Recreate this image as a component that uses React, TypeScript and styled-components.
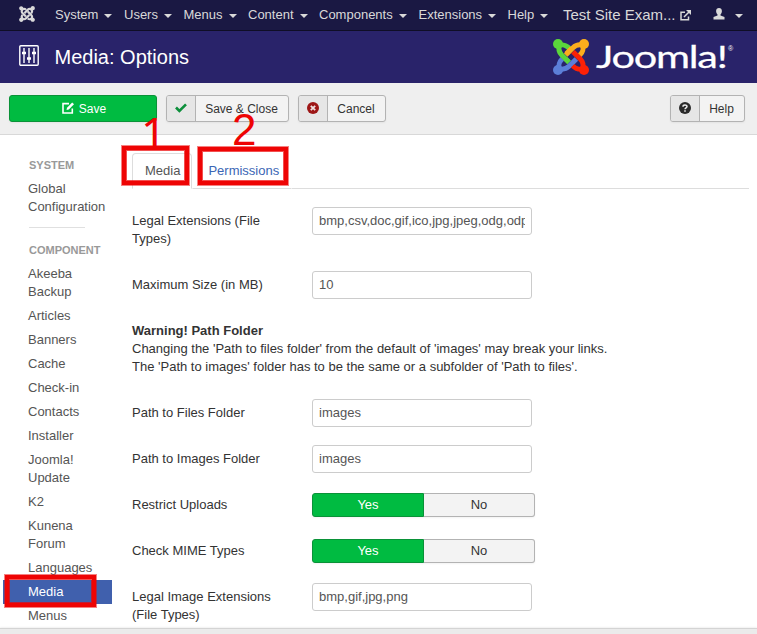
import React from "react";
import styled, { createGlobalStyle, css } from "styled-components";
import { FaJoomla } from "react-icons/fa";

const GlobalStyle = createGlobalStyle`
  * { box-sizing: border-box; }
  body {
    margin: 0;
    background: #fff;
    color: #333;
    font: 13px/18px "Liberation Sans", Arial, sans-serif;
    overflow: hidden;
  }
`;

const Page = styled.div`
  position: relative;
  display: flex;
  flex-direction: column;
  width: 757px;
  height: 634px;
  overflow: hidden;
`;

const Navbar = styled.nav`
  display: flex;
  flex: none;
  height: 31px;
  padding: 0 14px 0 19px;
  align-items: center;
  background: #1a1843;
  border-bottom: 1px solid #0f0e26;
  color: #d9d9d9;
`;

const BrandMark = styled.span`
  display: flex;
  width: 36px;
  margin-top: -2px;
  svg { width: 16px; height: 18px; }
`;

const NavItem = styled.a<{ $width: number }>`
  display: flex;
  align-items: center;
  width: ${(p) => p.$width}px;
  white-space: nowrap;
`;

const Caret = styled.i`
  margin: 2px 0 0 6px;
  border: 4px solid transparent;
  border-top-color: #d9d9d9;
  border-bottom: 0;
`;

const SiteLink = styled.a`
  display: flex;
  align-items: center;
  gap: 4px;
  font-size: 15px;
  white-space: nowrap;
`;

const UserMenu = styled.a`
  display: flex;
  align-items: center;
  margin-left: auto;
  gap: 4px;
  svg { margin-top: -3px; }
`;

const Header = styled.header`
  display: flex;
  flex: none;
  align-items: center;
  height: 52px;
  padding: 0 20px 0 19px;
  background: #29236a;
  color: #fff;
`;

const Title = styled.h1`
  flex: 1;
  margin: 0 0 0 15.5px;
  font-size: 20px;
  line-height: 24px;
  font-weight: normal;
`;

const HeaderIcon = styled.svg`
  display: block;
  margin-top: -4px;
`;

const Toolbar = styled.div`
  display: flex;
  flex: none;
  align-items: flex-start;
  gap: 9px;
  height: 52px;
  padding: 12px 12px 0 9px;
  background: #efefef;
  border-bottom: 1px solid #d8d8d8;
`;

const buttonBase = css`
  display: flex;
  height: 27px;
  padding: 0;
  font: 12px/27px "Liberation Sans", Arial, sans-serif;
  border-radius: 3px;
  box-shadow: 0 1px 2px rgba(0, 0, 0, 0.05);
  overflow: hidden;
`;

const SaveButton = styled.button`
  ${buttonBase}
  width: 148px;
  padding-left: 2px;
  justify-content: center;
  gap: 5px;
  color: #fff;
  background: #00bb41;
  border: 1px solid #0a9238;
  svg { margin-top: 6px; }
`;

const ToolButton = styled.button<{ $width: number; $end?: boolean }>`
  ${buttonBase}
  width: ${(p) => p.$width}px;
  margin-left: ${(p) => (p.$end ? "auto" : "0")};
  color: #333;
  background: #f3f3f3;
  border: 1px solid #b3b3b3;
`;

const ToolIcon = styled.span`
  display: flex;
  width: 29px;
  height: 25px;
  padding-bottom: 1px;
  align-items: center;
  justify-content: center;
  background: #e6e6e6;
  border-right: 1px solid #b3b3b3;
`;

const ToolLabel = styled.span`
  flex: 1;
  padding-right: 1px;
  text-align: center;
`;

const Body = styled.div`
  display: flex;
  flex: 1;
  min-height: 0;
  overflow: hidden;
`;

const Sidebar = styled.aside`
  width: 112px;
  flex: none;
  padding: 18px 0 0 3px;
`;

const SideHeading = styled.div`
  padding: 3px 0 3px 26px;
  font-size: 11px;
  font-weight: bold;
  color: #999;
`;

const SideLink = styled.a<{ $active?: boolean }>`
  display: block;
  padding: 3px 5px 3px 25px;
  color: ${(p) => (p.$active ? "#fff" : "#555")};
  background: ${(p) => (p.$active ? "#4060ad" : "transparent")};
`;

const Divider = styled.div`
  width: 56px;
  height: 1px;
  margin: 8px 0 10px 26px;
  background: #e0e0e0;
`;

const Content = styled.main`
  flex: 1;
  padding: 18px 8px 0 20px;
`;

const Tabs = styled.div`
  display: flex;
  height: 36px;
  margin-bottom: 18px;
  align-items: stretch;

  &::after {
    content: "";
    flex: 1;
    border-bottom: 1px solid #ddd;
  }
`;

const Tab = styled.a<{ $active?: boolean }>`
  padding: 8px ${(p) => (p.$active ? "11px 0 12px" : "12px 0 15px")};
  border: 1px solid ${(p) => (p.$active ? "#ddd" : "transparent")};
  border-bottom-color: ${(p) => (p.$active ? "#fff" : "#ddd")};
  border-radius: ${(p) => (p.$active ? "4px 4px 0 0" : "0")};
  color: ${(p) => (p.$active ? "#555" : "#3b66b5")};
`;

const Row = styled.div`
  display: grid;
  grid-template-columns: 180px auto;
  justify-content: start;
  margin-bottom: 18px;
`;

const Label = styled.label<{ $tall?: boolean }>`
  width: 160px;
  padding: 5px 0 ${(p) => (p.$tall ? 5 : 0)}px;
`;

const Input = styled.input`
  width: 220px;
  height: 28px;
  padding: 3px 6px 5px;
  font: 13px/18px "Liberation Sans", Arial, sans-serif;
  color: #555;
  background: #fff;
  border: 1px solid #ccc;
  border-radius: 3px;
`;

const Warning = styled.div`
  padding: 5px 0;
  margin-bottom: 18px;
`;

const Toggle = styled.div`
  display: flex;
  height: 24px;
  margin: 2px 0;
`;

const ToggleOption = styled.button<{ $on?: boolean }>`
  width: ${(p) => (p.$on ? 112 : 111)}px;
  padding: 0;
  font: 13px/20px "Liberation Sans", Arial, sans-serif;
  color: ${(p) => (p.$on ? "#fff" : "#333")};
  background: ${(p) => (p.$on ? "#00bb41" : "#f3f3f3")};
  border: 1px solid ${(p) => (p.$on ? "#0a9238" : "#b3b3b3")};
  border-left-width: ${(p) => (p.$on ? 1 : 0)}px;
  border-radius: ${(p) => (p.$on ? "3px 0 0 3px" : "0 3px 3px 0")};
  box-shadow: 0 1px 2px rgba(0, 0, 0, 0.05);
`;

const Footer = styled.footer`
  flex: none;
  height: 6px;
  background: #ebebeb;
  border-top: 1px solid #d4d4d4;
  box-shadow: 0 -1px 2px rgba(0, 0, 0, 0.06);
`;

const Highlight = styled.div<{ $x: number; $y: number; $w: number; $h: number }>`
  position: absolute;
  left: ${(p) => p.$x}px;
  top: ${(p) => p.$y}px;
  width: ${(p) => p.$w}px;
  height: ${(p) => p.$h}px;
  border: 4px solid #ee0404;
  box-shadow: 0 0 0 1px rgba(238, 4, 4, 0.5), inset 0 0 0 1px rgba(238, 4, 4, 0.7);
`;

const Step = styled.span<{ $x: number; $y: number; $font: string }>`
  position: absolute;
  left: ${(p) => p.$x}px;
  top: ${(p) => p.$y}px;
  font-family: ${(p) => p.$font}, sans-serif;
  font-size: 44px;
  line-height: 44px;
  color: #ee0404;
`;

const ARMS = [
  ["#5c7fd8", 270],
  ["#5bd63b", 0],
  ["#fbae1d", 90],
  ["#fb2106", 180],
] as const;

const JoomlaLogo = () => (
  <svg width="184" height="38" viewBox="0 0 184 38">
    <g transform="translate(0 1) scale(.33333)">
      {ARMS.map(([color, turn]) => (
        <g key={color} transform={`rotate(${turn} 54 54)`} stroke={color} fill="none" strokeWidth="15">
          <circle cx="15" cy="15" r="15" fill={color} stroke="none" />
          <path d="M15 19 C31 15 39 18 49 28" />
          <path d="M19 15 C15 31 17 39 26 48 L48 70" />
        </g>
      ))}
      <path d="M56 28 L40 44" stroke="#fbae1d" strokeWidth="15" />
      <path d="M38 60 L48 70" stroke="#5bd63b" strokeWidth="15" />
    </g>
    <text
      transform="translate(43 30) scale(1.38 1)"
      fill="#fff"
      stroke="#fff"
      strokeWidth=".25"
      fontFamily="Lato"
      fontSize="30"
      textLength="95.5"
      lengthAdjust="spacing"
    >
      Joomla!
    </text>
    <text x="175" y="13" fill="#fff" fontFamily="Liberation Sans" fontSize="7">®</text>
  </svg>
);

const SlidersIcon = () => (
  <HeaderIcon width="20" height="21" viewBox="0 0 20 21" fill="none" stroke="#fff">
    <rect x=".8" y=".8" width="18.4" height="19.4" rx="1" strokeWidth="1.4" />
    <path d="M5 3v15M10 3v15M15 3v15" strokeWidth="1.4" />
    <path d="M3 8h4M8 13.5h4M13 8h4" strokeWidth="2.6" />
  </HeaderIcon>
);

const ExternalIcon = () => (
  <svg width="11" height="11" viewBox="0 0 11 11" fill="none" stroke="#d9d9d9" strokeWidth="1.5">
    <path d="M5 2.3H1v7.4h7.5V6.5M4 7l5-5" />
    <path d="M6 0h5v5z" fill="#d9d9d9" stroke="none" />
  </svg>
);

const UserIcon = () => (
  <svg width="12" height="12" viewBox="0 0 11 12" fill="#d9d9d9">
    <path d="M5.500 0C7.300 0 8.400 1.200 8.400 3c0 1.500-.6 2.800-1.400 3.400v1.100L11 9V11.500H0V9l4-1.500V6.400C3.200 5.800 2.600 4.500 2.600 3c0-1.800 1.100-3 2.900-3z" />
  </svg>
);

const EditIcon = () => (
  <svg width="12" height="12" viewBox="0 0 12 12" fill="none" stroke="#fff">
    <path d="M7 1.6H1v9.400h9.300V6.500" strokeWidth="1.6" />
    <path d="M4.500 8 5 5.700 10.200.5 12 2.300 6.800 7.500z" fill="#fff" stroke="none" />
  </svg>
);

const CheckIcon = () => (
  <svg width="12" height="10" viewBox="0 0 12 10" fill="none" stroke="#0d8f3b" strokeWidth="2.6">
    <path d="M1 4.500 4.400 8 11 1.300" />
  </svg>
);

const CancelIcon = () => (
  <svg width="12" height="12" viewBox="0 0 12 12">
    <circle cx="6" cy="6" r="6" fill="#9d1616" />
    <path d="M3.800 3.800l4.400 4.400M8.200 3.800 3.800 8.200" stroke="#f0e0e0" strokeWidth="1.8" />
  </svg>
);

const HelpIcon = () => (
  <svg width="12" height="12" viewBox="0 0 12 12">
    <circle cx="6" cy="6" r="6" fill="#2b2b2b" />
    <path d="M4 4.700C4 2.600 8 2.600 8 4.500 8 5.800 6 5.800 6 7.200M6 8.300v1.500" fill="none" stroke="#eee" strokeWidth="1.5" />
  </svg>
);

const MENUS: [string, number][] = [
  ["System", 69],
  ["Users", 59.5],
  ["Menus", 64.5],
  ["Content", 71],
  ["Components", 99.5],
  ["Extensions", 89],
  ["Help", 55.5],
];

const COMPONENTS = [
  "Akeeba Backup", "Articles", "Banners", "Cache", "Check-in", "Contacts", "Installer",
  "Joomla! Update", "K2", "Kunena Forum", "Languages", "Media", "Menus",
];

const Field = ({ label, value, tall }: { label: string; value: string; tall?: boolean }) => (
  <Row>
    <Label $tall={tall}>{label}</Label>
    <Input defaultValue={value} />
  </Row>
);

const Switch = ({ label }: { label: string }) => (
  <Row>
    <Label>{label}</Label>
    <Toggle>
      <ToggleOption $on>Yes</ToggleOption>
      <ToggleOption>No</ToggleOption>
    </Toggle>
  </Row>
);

export default function App() {
  return (
    <Page>
      <GlobalStyle />
      <Navbar>
        <BrandMark><FaJoomla /></BrandMark>
        {MENUS.map(([name, width]) => (
          <NavItem key={name} $width={width}>{name}<Caret /></NavItem>
        ))}
        <SiteLink>Test Site Exam... <ExternalIcon /></SiteLink>
        <UserMenu><UserIcon /><Caret /></UserMenu>
      </Navbar>
      <Header>
        <SlidersIcon />
        <Title>Media: Options</Title>
        <JoomlaLogo />
      </Header>
      <Toolbar>
        <SaveButton><EditIcon />Save</SaveButton>
        <ToolButton $width={123}><ToolIcon><CheckIcon /></ToolIcon><ToolLabel>Save &amp; Close</ToolLabel></ToolButton>
        <ToolButton $width={88}><ToolIcon><CancelIcon /></ToolIcon><ToolLabel>Cancel</ToolLabel></ToolButton>
        <ToolButton $width={75} $end><ToolIcon><HelpIcon /></ToolIcon><ToolLabel>Help</ToolLabel></ToolButton>
      </Toolbar>
      <Body>
        <Sidebar>
          <SideHeading>SYSTEM</SideHeading>
          <SideLink>Global Configuration</SideLink>
          <Divider />
          <SideHeading>COMPONENT</SideHeading>
          {COMPONENTS.map((name) => (
            <SideLink key={name} $active={name === "Media"}>{name}</SideLink>
          ))}
        </Sidebar>
        <Content>
          <Tabs>
            <Tab $active>Media</Tab>
            <Tab>Permissions</Tab>
          </Tabs>
          <Field label="Legal Extensions (File Types)" value="bmp,csv,doc,gif,ico,jpg,jpeg,odg,odp,ods,odt,pdf,png" tall />
          <Field label="Maximum Size (in MB)" value="10" />
          <Warning>
            <b>Warning! Path Folder</b><br />
            Changing the 'Path to files folder' from the default of 'images' may break your links.<br />
            The 'Path to images' folder has to be the same or a subfolder of 'Path to files'.
          </Warning>
          <Field label="Path to Files Folder" value="images" />
          <Field label="Path to Images Folder" value="images" />
          <Switch label="Restrict Uploads" />
          <Switch label="Check MIME Types" />
          <Field label="Legal Image Extensions (File Types)" value="bmp,gif,jpg,png" tall />
        </Content>
      </Body>
      <Footer />
      <Highlight $x={122} $y={146} $w={67} $h={39} />
      <Highlight $x={198} $y={147} $w={90} $h={38} />
      <Highlight $x={5} $y={575} $w={91} $h={32} />
      <Step $x={141} $y={110} $font='"Noto Sans"'>1</Step>
      <Step $x={232} $y={108} $font='"Liberation Sans"'>2</Step>
    </Page>
  );
}
